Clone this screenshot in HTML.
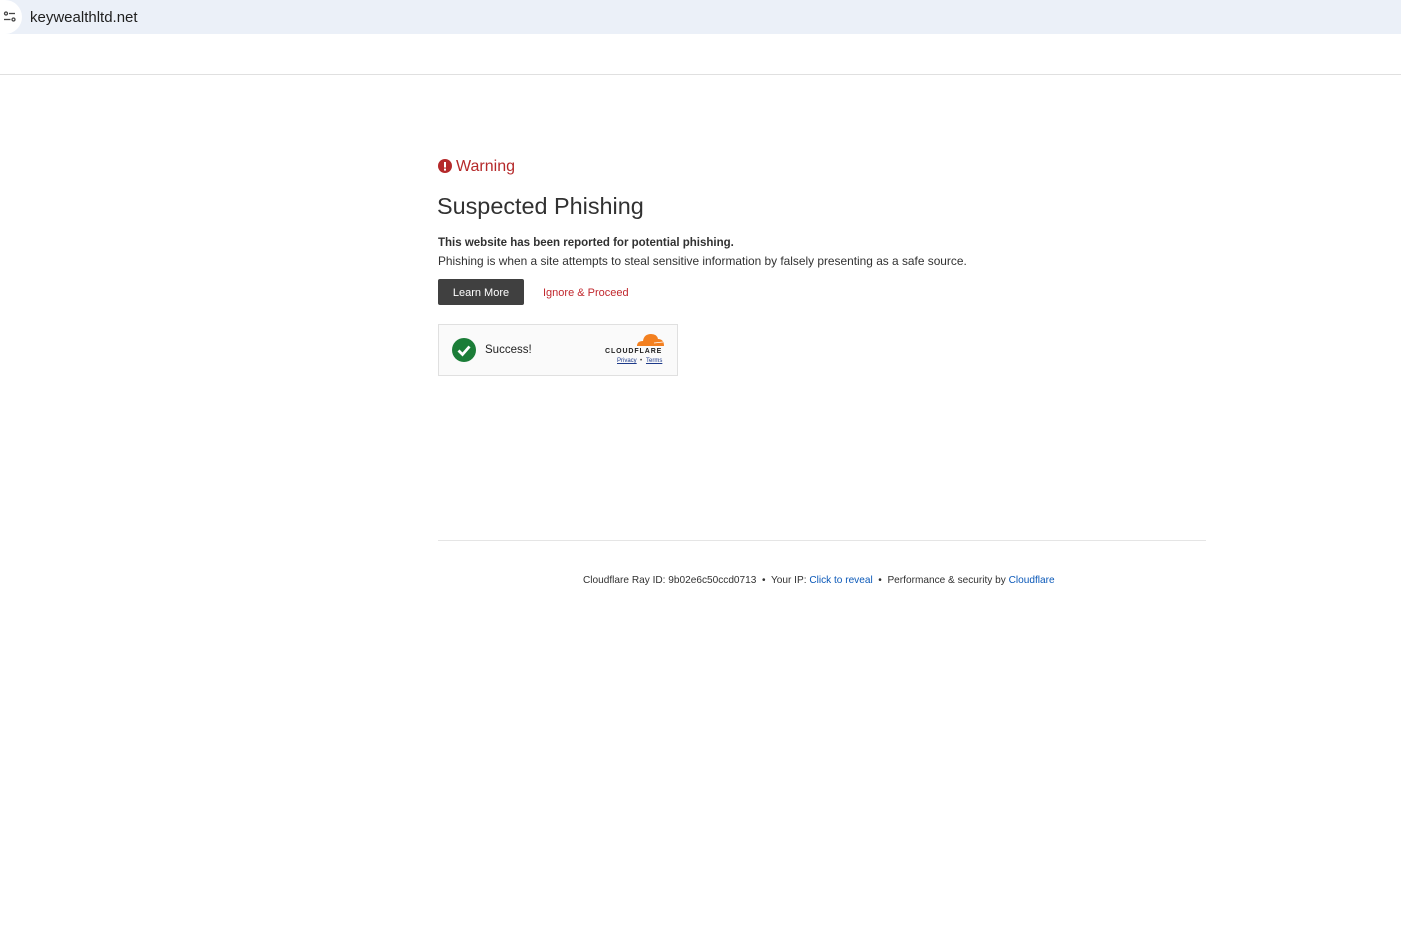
<!DOCTYPE html>
<html><head><meta charset="utf-8"><style>
body{margin:0;width:1401px;height:927px;background:#fff;font-family:"Liberation Sans",sans-serif;position:relative;overflow:hidden;color:#313131}
.bar{position:absolute;left:0;top:0;width:1401px;height:34px;background:#ebf0f8}
.ic{position:absolute;left:-6px;top:0;width:28px;height:34px;border-radius:0 17px 17px 0;background:#fff}
.url{position:absolute;left:30px;top:9px;font-size:15px;color:#1f1f1f}
.line{position:absolute;left:0;top:74px;width:1401px;height:1px;background:#e0e0e0}
.a{position:absolute}
</style></head><body>
<div class="bar"><div class="ic"></div>
<svg class="a" style="left:3px;top:11px" width="14" height="12" viewBox="0 0 14 12" fill="none" stroke="#444" stroke-width="1.3"><circle cx="3" cy="2.5" r="1.5"/><line x1="6" y1="2.5" x2="12" y2="2.5"/><line x1="1" y1="8.5" x2="7.5" y2="8.5"/><circle cx="10.5" cy="8.5" r="1.5"/></svg>
<div class="url">keywealthltd.net</div></div>
<div class="line"></div>
<svg class="a" style="left:438px;top:159px" width="14" height="14" viewBox="0 0 14 14"><circle cx="7" cy="7" r="7" fill="#b5292a"/><rect x="6" y="3" width="2" height="5.5" fill="#fff"/><rect x="6" y="9.6" width="2" height="2" fill="#fff"/></svg>
<div class="a" style="left:456px;top:158px;font-size:16px;color:#b5292a">Warning</div>
<div class="a" style="left:437px;top:193px;font-size:23.4px;color:#313131">Suspected Phishing</div>
<div class="a" style="left:438px;top:237px;font-size:11.5px;font-weight:bold;color:#313131">This website has been reported for potential phishing.</div>
<div class="a" style="left:438px;top:254px;font-size:11.9px;color:#313131">Phishing is when a site attempts to steal sensitive information by falsely presenting as a safe source.</div>
<div class="a" style="left:438px;top:279px;width:86px;height:26px;background:#404040;border-radius:2px;color:#fff;font-size:11px;line-height:28px;text-align:center">Learn More</div>
<div class="a" style="left:543px;top:287px;font-size:11px;color:#c1272d">Ignore &amp; Proceed</div>
<div class="a" style="left:438px;top:324px;width:238px;height:50px;border:1px solid #e0e0e0;background:#fafafa"></div>
<svg class="a" style="left:452px;top:338px" width="24" height="24" viewBox="0 0 24 24"><circle cx="12" cy="12" r="12" fill="#1b7d38"/><path d="M6.5 12.5l4 4 7-8" fill="none" stroke="#fff" stroke-width="2.8"/></svg>
<div class="a" style="left:485px;top:344px;font-size:11.5px;color:#232323">Success!</div>
<svg class="a" style="left:634px;top:332px" width="31" height="15" viewBox="0 0 31 15"><path d="M3 14 Q3 9 9 9 Q10 2 17 2 Q23 2 24 7 Q30 7 30 14 Z" fill="#f38020"/><path d="M20 11 L29 10" stroke="#fff" stroke-width="0.8"/></svg>
<div class="a" style="left:605px;top:348px;font-size:7px;font-weight:bold;letter-spacing:0.9px;color:#222">CLOUDFLARE</div>
<div class="a" style="left:617px;top:358px;font-size:6px;color:#1d3a8a;text-decoration:underline">Privacy</div>
<div class="a" style="left:640px;top:358px;font-size:6px;color:#333">•</div>
<div class="a" style="left:646px;top:358px;font-size:6px;color:#1d3a8a;text-decoration:underline">Terms</div>
<div class="a" style="left:438px;top:540px;width:768px;height:1px;background:#e5e5e5"></div>
<div class="a" style="left:583px;top:575px;font-size:10.1px;color:#313131;white-space:nowrap">Cloudflare Ray ID: 9b02e6c50ccd0713 &nbsp;•&nbsp; Your IP: <span style="color:#0a58b8">Click to reveal</span> &nbsp;•&nbsp; Performance &amp; security by <span style="color:#0a58b8">Cloudflare</span></div>
</body></html>
